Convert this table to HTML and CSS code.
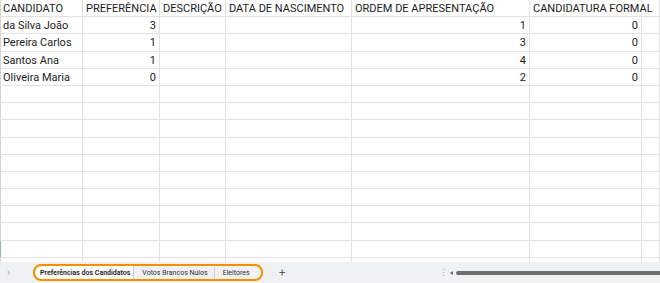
FILE: index.html
```html
<!DOCTYPE html>
<html lang="pt">
<head>
<meta charset="utf-8">
<link rel="stylesheet" href="styles.css">
</head>
<body>
<div class="sheet">
  <div class="grid">
    <div class="c">CANDIDATO</div><div class="c">PREFERÊNCIA</div><div class="c">DESCRIÇÃO</div><div class="c">DATA DE NASCIMENTO</div><div class="c">ORDEM DE APRESENTAÇÃO</div><div class="c">CANDIDATURA FORMAL</div><div class="c"></div>
    <div class="c">da Silva João</div><div class="c n">3</div><div class="c"></div><div class="c"></div><div class="c n">1</div><div class="c n">0</div><div class="c"></div>
    <div class="c">Pereira Carlos</div><div class="c n">1</div><div class="c"></div><div class="c"></div><div class="c n">3</div><div class="c n">0</div><div class="c"></div>
    <div class="c">Santos Ana</div><div class="c n">1</div><div class="c"></div><div class="c"></div><div class="c n">4</div><div class="c n">0</div><div class="c"></div>
    <div class="c">Oliveira Maria</div><div class="c n">0</div><div class="c"></div><div class="c"></div><div class="c n">2</div><div class="c n">0</div><div class="c"></div>
    <div class="c"></div><div class="c"></div><div class="c"></div><div class="c"></div><div class="c"></div><div class="c"></div><div class="c"></div>
    <div class="c"></div><div class="c"></div><div class="c"></div><div class="c"></div><div class="c"></div><div class="c"></div><div class="c"></div>
    <div class="c"></div><div class="c"></div><div class="c"></div><div class="c"></div><div class="c"></div><div class="c"></div><div class="c"></div>
    <div class="c"></div><div class="c"></div><div class="c"></div><div class="c"></div><div class="c"></div><div class="c"></div><div class="c"></div>
    <div class="c"></div><div class="c"></div><div class="c"></div><div class="c"></div><div class="c"></div><div class="c"></div><div class="c"></div>
    <div class="c"></div><div class="c"></div><div class="c"></div><div class="c"></div><div class="c"></div><div class="c"></div><div class="c"></div>
    <div class="c"></div><div class="c"></div><div class="c"></div><div class="c"></div><div class="c"></div><div class="c"></div><div class="c"></div>
    <div class="c"></div><div class="c"></div><div class="c"></div><div class="c"></div><div class="c"></div><div class="c"></div><div class="c"></div>
    <div class="c"></div><div class="c"></div><div class="c"></div><div class="c"></div><div class="c"></div><div class="c"></div><div class="c"></div>
    <div class="c sel"></div><div class="c"></div><div class="c"></div><div class="c"></div><div class="c"></div><div class="c"></div><div class="c"></div>
    <div class="c"></div><div class="c"></div><div class="c"></div><div class="c"></div><div class="c"></div><div class="c"></div><div class="c"></div>
  </div>
  <div class="tabbar">
    <span class="nav">&#x203A;</span>
    <div class="tabs">
      <span class="tab active">Preferências dos Candidatos</span>
      <span class="tab">Votos Brancos Nulos</span>
      <span class="tab last">Eleitores</span>
      <div class="ring"></div>
    </div>
    <span class="add">+</span>
    <span class="dots">&#x22EE;</span>
    <div class="scroll">
      <span class="arrow"></span>
      <span class="thumb"></span>
    </div>
  </div>
</div>
</body>
</html>
```
FILE: styles.css
```css
html, body {
  margin: 0;
  padding: 0;
  background: #ffffff;
}
body {
  width: 660px;
  height: 283px;
  overflow: hidden;
  font-family: Roboto, "Liberation Sans", Arial, sans-serif;
  font-size: 11px;
  color: #1c1c1c;
}
.sheet {
  display: flex;
  flex-direction: column;
  height: 283px;
}
.grid {
  flex: 1;
  overflow: hidden;
  display: grid;
  grid-template-columns: 83px 77px 66px 126px 178px 112px 1fr;
  grid-auto-rows: 17.2px;
  box-shadow: inset 1px 0 0 #d4d4d4;
}
.c {
  box-sizing: border-box;
  border-right: 1px solid #e2e2e2;
  border-bottom: 1px solid #e2e2e2;
  padding: 0 3px 0 3px;
  line-height: 17px;
  white-space: nowrap;
}
.c.n {
  text-align: right;
}
.c.sel {
  box-shadow: inset 1px 0 0 #86c19c;
}
.tabbar {
  height: 21px;
  flex: none;
  background: #eff1f3;
  display: flex;
  align-items: center;
  font-size: 7px;
  color: #303030;
  white-space: nowrap;
}
.nav {
  flex: none;
  width: 33px;
  padding-left: 7px;
  box-sizing: border-box;
  color: #a8a8a8;
  font-size: 10px;
}
.tabs {
  flex: none;
  position: relative;
  display: flex;
  align-items: center;
  height: 17px;
  padding: 0 4px;
  width: 230px;
  box-sizing: border-box;
}
.tab {
  flex: none;
  padding: 0 6px 0 8px;
  height: 12px;
  line-height: 12px;
  border-right: 1px solid #cfcfcf;
}
.tab.last {
  border-right: none;
}
.tab.active {
  background: #ffffff;
  font-weight: 600;
  padding: 0 3px;
  height: 14px;
  line-height: 14px;
  box-shadow: inset 0 -1px 0 #2f8a50;
  color: #1a1a1a;
}
.ring {
  position: absolute;
  inset: 0;
  border: 2px solid #f39000;
  border-radius: 8px;
}
.add {
  flex: none;
  margin-left: 16px;
  font-size: 11px;
  color: #555;
  width: 160px;
}
.dots {
  flex: none;
  color: #a0a0a0;
  font-size: 9px;
  width: 10px;
}
.scroll {
  flex: 1;
  display: flex;
  align-items: center;
  gap: 3px;
  padding-left: 1px;
}
.arrow {
  width: 0;
  height: 0;
  border-top: 2px solid transparent;
  border-bottom: 2px solid transparent;
  border-right: 3px solid #666;
}
.thumb {
  flex: 1;
  height: 4px;
  background: #6e6e6e;
  border-radius: 2px 0 0 2px;
}
```
